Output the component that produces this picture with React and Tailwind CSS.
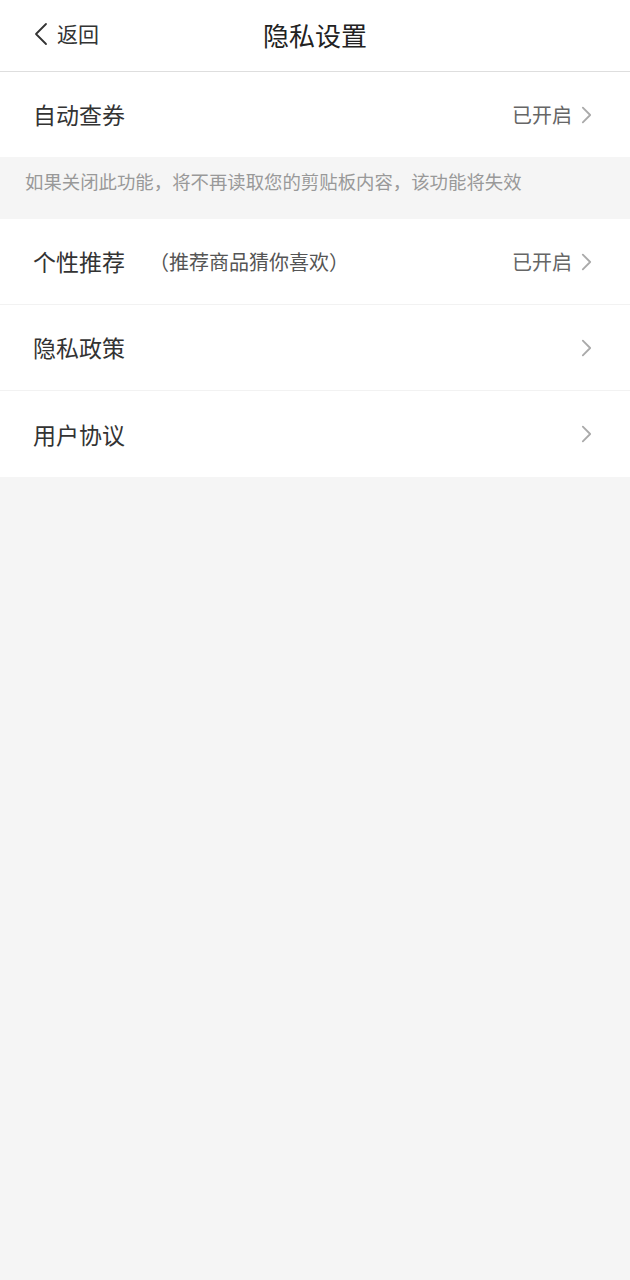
import React from "react";

const rows = [
  { id: 1, label: "个性推荐", hint: "（推荐商品猜你喜欢）", status: "已开启" },
  { id: 2, label: "隐私政策" },
  { id: 3, label: "用户协议" },
];

function Chevron({ className }) {
  return (
    <svg viewBox="0 0 12 20" className={className} fill="none" stroke="currentColor" strokeWidth="2" strokeLinecap="round" strokeLinejoin="round">
      <path d="M2 2l8 8-8 8" />
    </svg>
  );
}

export default function App() {
  return (
    <div
      className="min-h-[1280px] w-full bg-[#f5f5f5]"
      style={{ fontFamily: '"Noto Sans CJK SC", "Noto Sans", sans-serif' }}
    >
      {/* header */}
      <div className="relative flex h-[72px] items-center justify-center border-b border-[#dedede] bg-white pb-[3px]">
        <div className="absolute left-[34px] top-0 flex h-full items-center pb-[3px] text-[#333]">
          <svg viewBox="0 0 14 24" className="h-[24px] w-[14px]" fill="none" stroke="currentColor" strokeWidth="1.8" strokeLinecap="round" strokeLinejoin="round">
            <path d="M12 2L2 12l10 10" />
          </svg>
          <span className="ml-[9px] text-[21px]">返回</span>
        </div>
        <h1 className="text-[26px] text-[#222]">隐私设置</h1>
      </div>

      {/* 自动查券 */}
      <div className="flex h-[85px] items-center justify-between bg-white pl-[33px] pr-[38px]">
        <span className="text-[23px] text-[#333]">自动查券</span>
        <div className="flex items-center text-[#666]">
          <span className="text-[20px]">已开启</span>
          <Chevron className="ml-[9px] h-[20px] w-[11px] text-[#aaa]" />
        </div>
      </div>

      <div className="flex h-[62px] items-start px-[25px] pt-[10px] text-[18.4px] leading-[28px] text-[#999]">
        如果关闭此功能，将不再读取您的剪贴板内容，该功能将失效
      </div>

      <div className="bg-white">
        {rows.map((row, i) => (
          <div
            key={row.id}
            className={`flex h-[86px] items-center justify-between pl-[33px] pr-[38px] ${i < rows.length - 1 ? "border-b border-[#f2f2f2]" : ""}`}
          >
            <div className="flex items-center">
              <span className="text-[23px] text-[#333]">{row.label}</span>
              {row.hint && <span className="ml-[24px] text-[20px] text-[#555]">{row.hint}</span>}
            </div>
            <div className="flex items-center text-[#666]">
              {row.status && <span className="text-[20px]">{row.status}</span>}
              <Chevron className="ml-[9px] h-[20px] w-[11px] text-[#aaa]" />
            </div>
          </div>
        ))}
      </div>
    </div>
  );
}
